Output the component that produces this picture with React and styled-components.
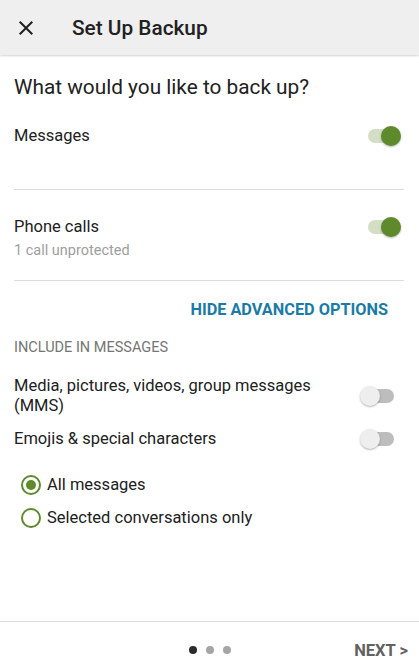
import styled, { createGlobalStyle } from "styled-components";

const Global = createGlobalStyle`
  html, body {
    margin: 0;
    padding: 0;
    background: #ffffff;
    font-family: Roboto, "Noto Sans", sans-serif;
    color: #212121;
  }
`;

export default function App() {
  return (
    <Screen>
      <Global />
      <Header>
        <CloseIcon viewBox="0 0 24 24">
          <path d="M19 6.41L17.59 5 12 10.59 6.41 5 5 6.41 10.59 12 5 17.59 6.41 19 12 13.41 17.59 19 19 17.59 13.41 12z" />
        </CloseIcon>
        <HeaderTitle>Set Up Backup</HeaderTitle>
      </Header>

      <Body>
        <Question>What would you like to back up?</Question>

        <Row>
          <RowText>
            <Label>Messages</Label>
          </RowText>
          <Toggle $on />
        </Row>
        <Divider />
        <Row>
          <RowText>
            <Label>Phone calls</Label>
            <Sub>1 call unprotected</Sub>
          </RowText>
          <Toggle $on />
        </Row>
        <Divider />

        <AdvancedLink>HIDE ADVANCED OPTIONS</AdvancedLink>
        <SectionHead>INCLUDE IN MESSAGES</SectionHead>

        <Options>
          <OptionRow>
            <Label>Media, pictures, videos, group messages (MMS)</Label>
            <Toggle />
          </OptionRow>
          <OptionRow>
            <Label>Emojis &amp; special characters</Label>
            <Toggle />
          </OptionRow>
        </Options>

        <Radios>
          <RadioRow>
            <Radio $checked />
            <Label>All messages</Label>
          </RadioRow>
          <RadioRow>
            <Radio />
            <Label>Selected conversations only</Label>
          </RadioRow>
        </Radios>
      </Body>

      <Footer>
        <Dots>
          <Dot $active />
          <Dot />
          <Dot />
        </Dots>
        <NextButton>NEXT &gt;</NextButton>
      </Footer>
    </Screen>
  );
}

function Toggle({ $on }) {
  return (
    <ToggleBox>
      <Track $on={$on} />
      <Thumb $on={$on} />
    </ToggleBox>
  );
}

const Screen = styled.div`
  width: 419px;
  height: 671px;
  display: flex;
  flex-direction: column;
  overflow: hidden;
`;

const Header = styled.div`
  height: 55px;
  flex-shrink: 0;
  background: #efefef;
  display: flex;
  align-items: center;
  padding-left: 14px;
  box-shadow: 0 1px 2px rgba(0, 0, 0, 0.18);
  position: relative;
  z-index: 1;
`;

const CloseIcon = styled.svg`
  width: 24px;
  height: 24px;
  fill: #212121;
`;

const HeaderTitle = styled.div`
  margin-left: 34px;
  font-size: 20.8px;
  font-weight: 500;
  color: #212121;
`;

const Body = styled.div`
  flex: 1;
  padding: 0 18px 0 14px;
  display: flex;
  flex-direction: column;
`;

const Question = styled.div`
  font-size: 20.8px;
  margin-top: 20px;
  line-height: 24px;
`;

const Row = styled.div`
  height: 90px;
  display: flex;
  justify-content: space-between;
  align-items: flex-start;
  padding-top: 27px;
  box-sizing: border-box;
`;

const RowText = styled.div`
  display: flex;
  flex-direction: column;
  gap: 5px;
`;

const Label = styled.div`
  font-size: 16.5px;
  line-height: 20px;
  color: #212121;
`;

const Sub = styled.div`
  font-size: 14.5px;
  color: #9e9e9e;
  line-height: 18px;
`;

const Divider = styled.div`
  height: 1px;
  background: #dcdcdc;
  margin-right: -3px;
`;

const ToggleBox = styled.div`
  width: 36px;
  height: 20px;
  position: relative;
  flex-shrink: 0;
`;

const Track = styled.div`
  position: absolute;
  left: 3px;
  top: 3px;
  width: 26px;
  height: 14px;
  border-radius: 7px;
  background: ${(p) => (p.$on ? "#d3dec4" : "#bdbdbd")};
`;

const Thumb = styled.div`
  position: absolute;
  top: 0;
  left: ${(p) => (p.$on ? "16px" : "-5px")};
  width: 20px;
  height: 20px;
  border-radius: 50%;
  background: ${(p) => (p.$on ? "#5e8a2c" : "#eeeeee")};
  box-shadow: 0 1px 2px rgba(0, 0, 0, 0.3);
`;

const AdvancedLink = styled.div`
  align-self: flex-end;
  margin-right: 13px;
  margin-top: 19px;
  font-size: 16.3px;
  font-weight: 700;
  color: #1a7ba6;
  line-height: 20px;
`;

const SectionHead = styled.div`
  margin-top: 19px;
  font-size: 14.5px;
  color: #757575;
  line-height: 18px;
`;

const Options = styled.div`
  display: flex;
  flex-direction: column;
  gap: 13px;
  margin-top: 19px;
`;

const OptionRow = styled.div`
  display: flex;
  justify-content: space-between;
  align-items: center;
  gap: 28px;
`;

const Radios = styled.div`
  display: flex;
  flex-direction: column;
  gap: 13px;
  margin-top: 26px;
  padding-left: 7px;
`;

const RadioRow = styled.div`
  display: flex;
  align-items: center;
  gap: 6px;
`;

const Radio = styled.div`
  width: 16px;
  height: 16px;
  border-radius: 50%;
  border: 2px solid #5e8a2c;
  display: flex;
  align-items: center;
  justify-content: center;
  &::after {
    content: "";
    width: 10px;
    height: 10px;
    border-radius: 50%;
    background: ${(p) => (p.$checked ? "#5e8a2c" : "transparent")};
  }
`;

const Footer = styled.div`
  height: 50px;
  flex-shrink: 0;
  box-sizing: border-box;
  border-top: 1px solid #dcdcdc;
  display: flex;
  align-items: center;
  justify-content: flex-end;
  position: relative;
  padding-right: 11px;
`;

const Dots = styled.div`
  position: absolute;
  left: 189px;
  top: 24px;
  display: flex;
  gap: 9px;
`;

const Dot = styled.div`
  width: 8px;
  height: 8px;
  border-radius: 50%;
  background: ${(p) => (p.$active ? "#2b2b2b" : "#a5a5a5")};
`;

const NextButton = styled.div`
  font-size: 16.5px;
  font-weight: 700;
  color: #616161;
  margin-top: 8px;
`;
